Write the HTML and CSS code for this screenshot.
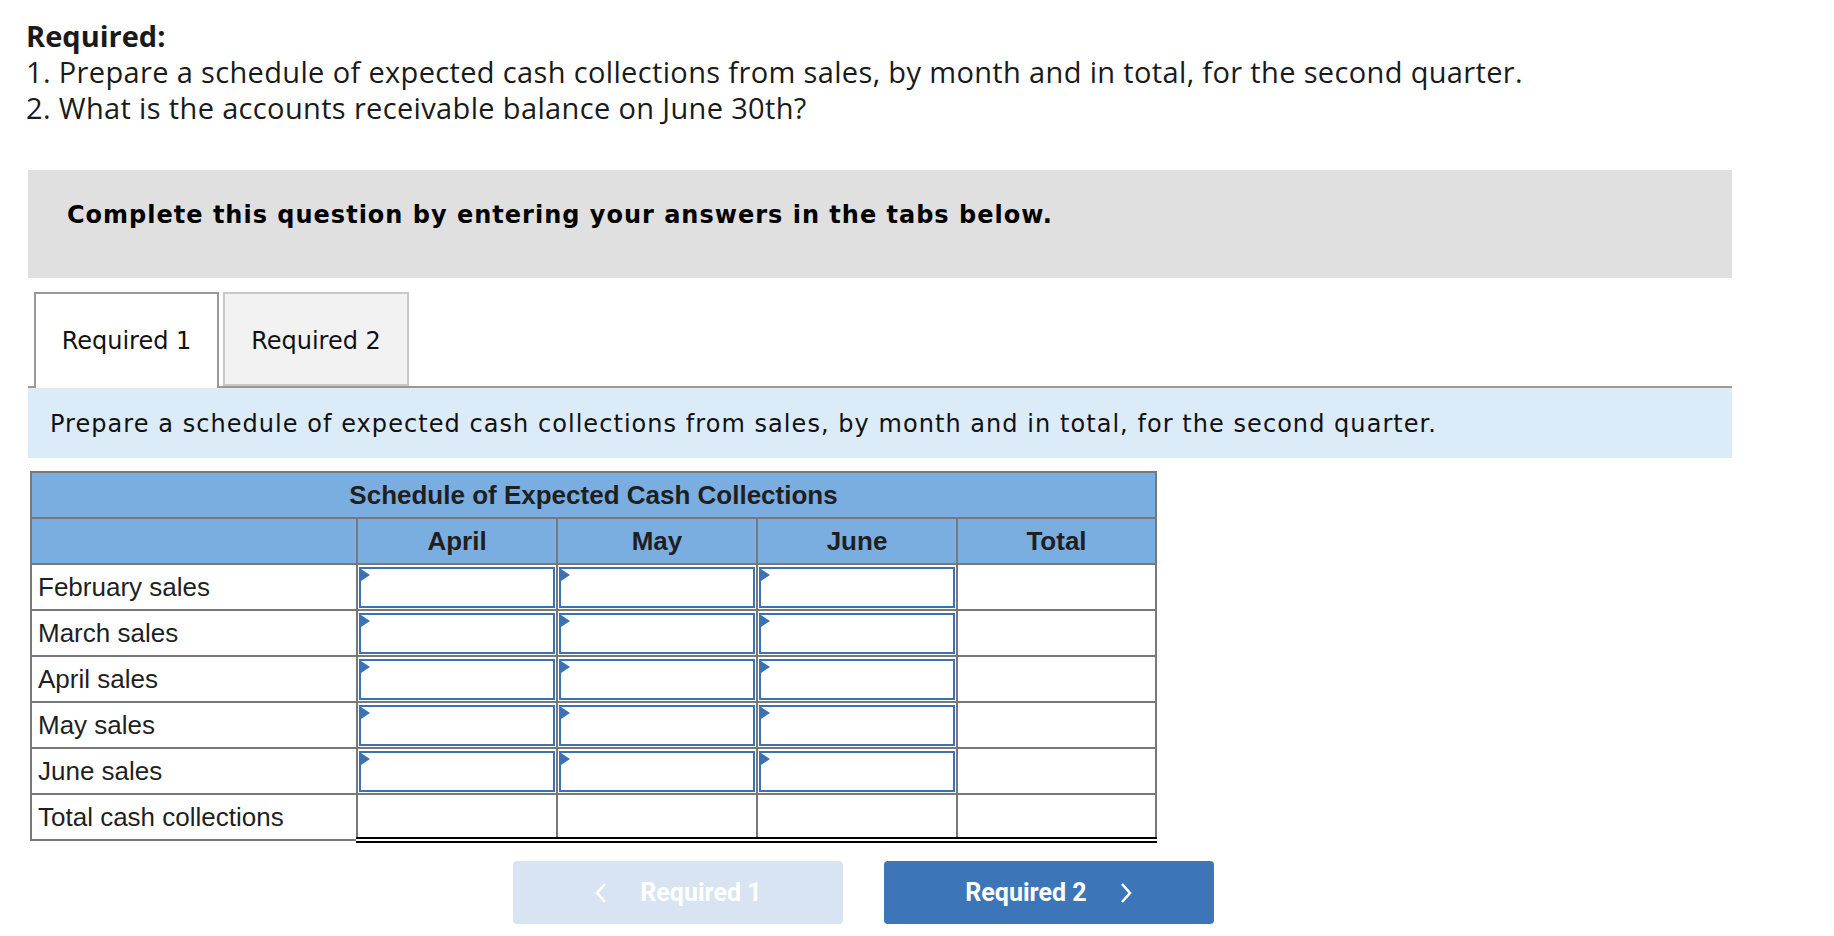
FILE: index.html
```html
<!DOCTYPE html>
<html>
<head>
<meta charset="utf-8">
<link rel="stylesheet" href="styles.css">
</head>
<body>
<div class="page">
  <div class="required">
    <div class="req-title">Required:</div>
    <div class="req-line">1. Prepare a schedule of expected cash collections from sales, by month and in total, for the second quarter.</div>
    <div class="req-line">2. What is the accounts receivable balance on June 30th?</div>
  </div>

  <div class="instruct-box">Complete this question by entering your answers in the tabs below.</div>

  <div class="tabs">
    <div class="tab tab-active">Required 1</div>
    <div class="tab tab-inactive">Required 2</div>
  </div>

  <div class="tab-desc">Prepare a schedule of expected cash collections from sales, by month and in total, for the second quarter.</div>

  <table class="sched">
    <colgroup>
      <col class="c-label">
      <col class="c-month">
      <col class="c-month">
      <col class="c-month">
      <col class="c-total">
    </colgroup>
    <thead>
      <tr class="title-row"><th colspan="5">Schedule of Expected Cash Collections</th></tr>
      <tr class="head-row"><th></th><th>April</th><th>May</th><th>June</th><th>Total</th></tr>
    </thead>
    <tbody>
      <tr><td class="label">February sales</td><td class="inp"><div class="box"></div></td><td class="inp"><div class="box"></div></td><td class="inp"><div class="box"></div></td><td></td></tr>
      <tr><td class="label">March sales</td><td class="inp"><div class="box"></div></td><td class="inp"><div class="box"></div></td><td class="inp"><div class="box"></div></td><td></td></tr>
      <tr><td class="label">April sales</td><td class="inp"><div class="box"></div></td><td class="inp"><div class="box"></div></td><td class="inp"><div class="box"></div></td><td></td></tr>
      <tr><td class="label">May sales</td><td class="inp"><div class="box"></div></td><td class="inp"><div class="box"></div></td><td class="inp"><div class="box"></div></td><td></td></tr>
      <tr><td class="label">June sales</td><td class="inp"><div class="box"></div></td><td class="inp"><div class="box"></div></td><td class="inp"><div class="box"></div></td><td></td></tr>
      <tr class="total-row"><td class="label">Total cash collections</td><td class="tot"></td><td class="tot"></td><td class="tot"></td><td class="tot"></td></tr>
    </tbody>
  </table>

  <div class="nav">
    <div class="btn btn-prev"><svg class="chev chev-l" width="14" height="22" viewBox="0 0 14 22"><polyline points="11,2 3,11 11,20" fill="none" stroke="#fff" stroke-width="2.6"/></svg>Required 1</div>
    <div class="btn btn-next">Required 2<svg class="chev chev-r" width="14" height="22" viewBox="0 0 14 22"><polyline points="3,2 11,11 3,20" fill="none" stroke="#fff" stroke-width="2.6"/></svg></div>
  </div>
</div>
</body>
</html>
```
FILE: styles.css
```css
html, body {
  margin: 0;
  padding: 0;
  background: #fff;
}
.page {
  padding: 18px 0 0 26px;
  width: 1706px;
}
.required {
  font-family: "Open Sans", "Lato", sans-serif;
  color: #1a1a1a;
  font-size: 29px;
  letter-spacing: 0.35px;
  line-height: 36px;
}
.req-title {
  font-weight: 700;
  letter-spacing: 0;
}
.instruct-box {
  margin-top: 44px;
  margin-left: 2px;
  height: 108px;
  box-sizing: border-box;
  background: #e0e0e0;
  display: flex;
  align-items: flex-start;
  padding-top: 31px;
  padding-left: 39px;
  font-family: "DejaVu Sans", Verdana, sans-serif;
  font-weight: 700;
  font-size: 24px;
  letter-spacing: 1px;
  color: #000;
}
.tabs {
  display: flex;
  gap: 4px;
  margin-top: 14px;
  margin-left: 8px;
  height: 94px;
}
.tab {
  box-sizing: border-box;
  display: flex;
  align-items: center;
  justify-content: center;
  font-family: "DejaVu Sans", Verdana, sans-serif;
  font-size: 24px;
  color: #111;
}
.tab-active {
  width: 185px;
  border: 2px solid #999;
  border-bottom: none;
  background: #fff;
  height: 96px;
  position: relative;
  z-index: 1;
}
.tab-inactive {
  width: 186px;
  border: 2px solid #c8c8c8;
  background: #f2f2f2;
  padding-top: 3px;
}
.tab-desc {
  margin-left: 2px;
  border-top: 2px solid #999;
  background: #dbebf8;
  height: 72px;
  box-sizing: border-box;
  display: flex;
  align-items: center;
  padding-left: 22px;
  padding-top: 2px;
  font-family: "DejaVu Sans", Verdana, sans-serif;
  font-size: 24px;
  letter-spacing: 1.05px;
  color: #111;
}
.sched {
  margin-top: 13px;
  margin-left: 4px;
  border-collapse: collapse;
  font-family: "Liberation Sans", Arial, sans-serif;
  color: #222;
  table-layout: fixed;
  width: 1125px;
}
.c-label { width: 326px; }
.c-month { width: 200px; }
.c-total { width: 199px; }
.sched th, .sched td {
  border: 2px solid #787878;
  padding: 0;
}
.sched th {
  background: #7aade0;
  font-size: 26px;
  font-weight: 700;
  color: #1f1f1f;
  text-align: center;
}
.title-row th {
  height: 44px;
}
.head-row th {
  height: 44px;
}
.sched td {
  height: 42px;
  background: #fff;
}
.sched td.label {
  font-size: 26px;
  padding-left: 6px;
  color: #1f1f1f;
}
.sched td.inp {
  padding: 1px;
}
.box {
  position: relative;
  border: 2px solid #3b72b6;
  box-sizing: border-box;
  height: 41px;
}
.box::before {
  content: "";
  position: absolute;
  left: 0;
  top: 0;
  border-left: 9px solid #3b72b6;
  border-top: 6px solid transparent;
  border-bottom: 6px solid transparent;
}
.total-row td.tot {
  border-top: 2px solid #000;
  border-bottom: 6px double #000;
}
.nav {
  display: flex;
  gap: 41px;
  margin-top: 18px;
  margin-left: 487px;
}
.btn {
  width: 330px;
  height: 63px;
  border-radius: 4px;
  display: flex;
  align-items: center;
  justify-content: center;
  font-family: "Roboto", "Liberation Sans", sans-serif;
  font-weight: 700;
  font-size: 25px;
  color: #fff;
  box-sizing: border-box;
}
.btn-prev {
  background: #d9e4f2;
}
.btn-next {
  background: #3d76b8;
}
.chev {
  display: block;
}
.chev-l { margin-right: 32px; }
.chev-r { margin-left: 32px; }
```
